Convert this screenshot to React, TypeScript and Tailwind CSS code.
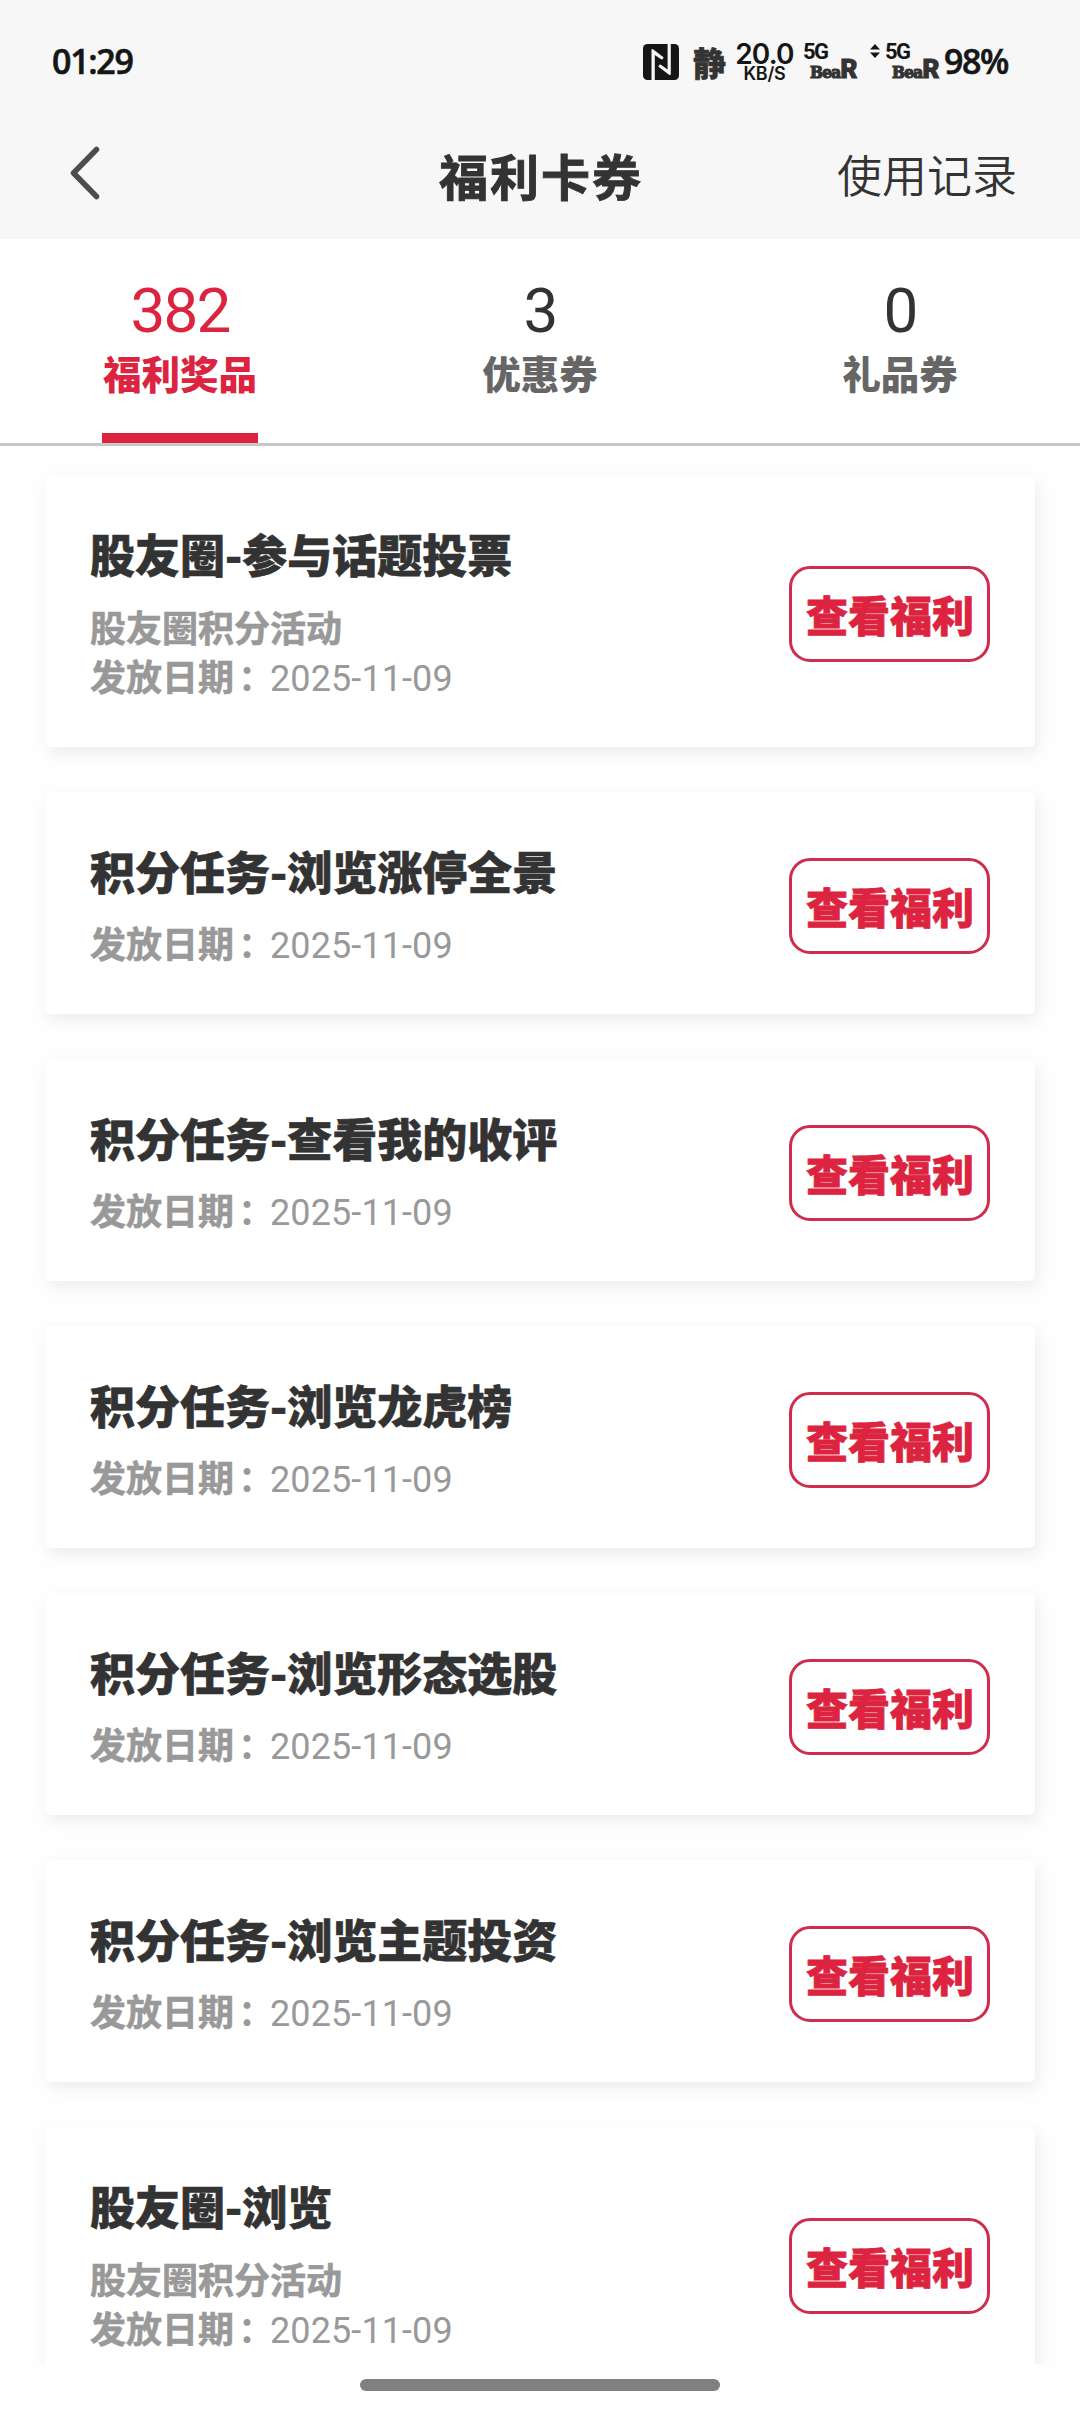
import { useState } from "react";
import clsx from "clsx";

interface Tab {
  id: string;
  label: string;
  count: number;
}

interface Coupon {
  id: number;
  title: string;
  source?: string;
  date: string;
}

const TABS: Tab[] = [
  { id: "prize", label: "福利奖品", count: 382 },
  { id: "discount", label: "优惠券", count: 3 },
  { id: "gift", label: "礼品券", count: 0 },
];

const COUPONS: Coupon[] = [
  { id: 1, title: "股友圈-参与话题投票", source: "股友圈积分活动", date: "2025-11-09" },
  { id: 2, title: "积分任务-浏览涨停全景", date: "2025-11-09" },
  { id: 3, title: "积分任务-查看我的收评", date: "2025-11-09" },
  { id: 4, title: "积分任务-浏览龙虎榜", date: "2025-11-09" },
  { id: 5, title: "积分任务-浏览形态选股", date: "2025-11-09" },
  { id: 6, title: "积分任务-浏览主题投资", date: "2025-11-09" },
  { id: 7, title: "股友圈-浏览", source: "股友圈积分活动", date: "2025-11-09" },
];

function NfcIcon() {
  return (
    <svg width="36" height="36" viewBox="0 0 36 36">
      <rect width="36" height="36" rx="4.5" fill="#161616" />
      <path d="M8.5 36V5.5Q9 4.5 10 5.2L20.5 13.2Q20.5 15.5 18.5 15.5L11.8 11V36Z" fill="#f7f7f7" />
      <path d="M24.6 0H27.8V30.5Q27 31.5 26 30.8L15.5 22.8Q15.5 20.5 17.5 20.5L24.6 25.5Z" fill="#f7f7f7" />
    </svg>
  );
}

function Signal() {
  return (
    <div className="flex w-[55px] flex-col pt-px">
      <span className="h-4 font-['Roboto'] text-[22px] leading-4 font-bold tracking-[-1.5px]">5G</span>
      <span className="flex h-[18px] items-baseline pl-[7px] leading-[18px] text-[#333333]">
        <span className="font-['DejaVu_Serif_Condensed','DejaVu_Serif'] text-[17px] font-bold tracking-[-0.7px] [-webkit-text-stroke:1.2px_#333333]">
          Bea
        </span>
        <span className="font-['Roboto'] text-[26px] font-black tracking-[-1px] [-webkit-text-stroke:1px_#333333]">
          R
        </span>
      </span>
    </div>
  );
}

function StatusBar() {
  return (
    <div className="flex h-[123px] items-start justify-between pr-[70px] pl-[52px] text-[#161616]">
      <span className="mt-[41px] font-['Open_Sans'] text-[34px] leading-10 font-semibold tracking-[-1.3px] [-webkit-text-stroke:0.6px_#161616]">
        01:29
      </span>
      <div className="flex pt-[43px]">
        <div className="mt-px w-[50px]">
          <NfcIcon />
        </div>
        <span className="mt-[3px] w-[43px] text-[33px] leading-8 font-black text-[#333333] [-webkit-text-stroke:0.6px_#333333]">
          静
        </span>
        <div className="flex w-[57px] flex-col items-center font-['Inter'] font-semibold">
          <span className="mt-px text-[28px] leading-5 tracking-[-0.8px]">20.0</span>
          <span className="mt-[2px] text-[18px] leading-[15px] tracking-[-0.2px]">KB/S</span>
        </div>
        <div className="ml-[10px]">
          <Signal />
        </div>
        <svg className="mt-px ml-3" width="10" height="14" viewBox="0 0 10 14" fill="#161616">
          <path d="M5 0L10 5.5H0Z" />
          <path d="M5 14L0 8.5H10Z" />
        </svg>
        <div className="ml-[5px]">
          <Signal />
        </div>
        <span className="ml-1 w-[66px] font-['Open_Sans'] text-[34px] leading-9 font-semibold tracking-[-1.4px] [-webkit-text-stroke:0.6px_#161616]">
          98%
        </span>
      </div>
    </div>
  );
}

function Header() {
  return (
    <header className="bg-[#f7f7f7]">
      <StatusBar />
      <div className="grid h-[116px] grid-cols-3 items-start text-[#333333]">
        <button className="mt-[23px] ml-[70px] w-8" aria-label="返回">
          <svg width="32" height="54" viewBox="0 0 32 54" fill="none">
            <path
              d="M26.5 3.5L3.5 27L26.5 50.5"
              stroke="#4d4d4d"
              strokeWidth="5.5"
              strokeLinecap="round"
              strokeLinejoin="round"
            />
          </svg>
        </button>
        <h1 className="mt-[22px] pl-[2px] text-center text-[49px] leading-[60px] font-bold tracking-[2px] whitespace-nowrap [-webkit-text-stroke:0.9px_#333333]">
          福利卡券
        </h1>
        <button className="mt-[21px] mr-[63px] text-right text-[45px] leading-[60px] font-[350] whitespace-nowrap">
          使用记录
        </button>
      </div>
    </header>
  );
}

function CouponCard({ coupon }: { coupon: Coupon }) {
  return (
    <div className="flex shrink-0 justify-between rounded-md bg-white pt-[48px] pr-[45px] pb-[42px] pl-[45px] shadow-[3px_6px_15px_rgba(0,0,0,0.07)]">
      <div className="flex flex-col">
        <h2 className="h-[80px] text-[45px] leading-[61px] font-black text-[#333333] [-webkit-text-stroke:0.6px_#333333]">
          {coupon.title}
        </h2>
        <div className="pb-[2px] text-[36px] font-bold text-[#999999]">
          {coupon.source && (
            <p className="h-[50px] leading-[46px] [-webkit-text-stroke:0.6px_#999999]">{coupon.source}</p>
          )}
          <p className="h-[50px] leading-[44px]">
            <span className="[-webkit-text-stroke:0.6px_#999999]">发放日期</span>
            <span className="-mr-1 pl-1">：</span>
            <span className="font-['Roboto'] font-normal tracking-[0.1px]">{coupon.date}</span>
          </p>
        </div>
      </div>
      <button className="h-24 w-[201px] self-center rounded-[21px] border-3 border-[#cf2d4b] pl-px text-[42px] leading-[88px] font-black whitespace-nowrap text-[#dc2440] [-webkit-text-stroke:0.8px_#dc2440]">
        查看福利
      </button>
    </div>
  );
}

export default function App() {
  const [active, setActive] = useState("prize");

  return (
    <div className="flex h-[2412px] w-[1080px] flex-col overflow-hidden bg-[#fefefe] font-['Noto_Sans_CJK_SC',sans-serif]">
      <Header />

      <nav className="grid h-[207px] shrink-0 grid-cols-3 border-b-3 border-[#c8c8c8] bg-white">
        {TABS.map((tab) => (
          <button
            key={tab.id}
            onClick={() => setActive(tab.id)}
            className={clsx(
              "flex flex-col items-center pt-[42px]",
              active === tab.id ? "text-[#dc2440]" : "text-[#666666]"
            )}
          >
            <span
              className={clsx(
                "font-['Roboto'] text-[62px] leading-[60px] font-[450] tracking-[-1.8px]",
                active !== tab.id && "text-[#333333]"
              )}
            >
              {tab.count}
            </span>
            <span className="mt-[6px] text-[38.5px] leading-[50px] font-black">{tab.label}</span>
            {active === tab.id && <span className="mt-auto h-[10px] w-[156px] bg-[#dc2440]" />}
          </button>
        ))}
      </nav>

      <main className="flex min-h-0 flex-1 flex-col gap-[45px] overflow-hidden px-[45px] pt-[29px]">
        {COUPONS.map((coupon) => (
          <CouponCard key={coupon.id} coupon={coupon} />
        ))}
      </main>

      <footer className="flex h-12 shrink-0 justify-center bg-[#fefefe] pt-[15px]">
        <div className="h-3 w-[360px] rounded-full bg-[#808080]" />
      </footer>
    </div>
  );
}
